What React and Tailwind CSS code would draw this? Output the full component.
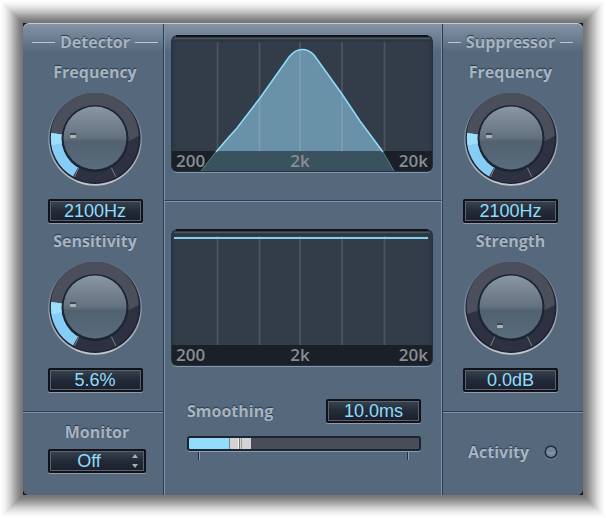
import React from "react";

const SHADE = [118, 122, 127, 133, 140, 147, 155, 163, 171, 180, 189, 197, 205, 213, 220, 227, 233, 238, 243, 247, 250, 253];
const halo = SHADE.map((v, i) => `0 0 0 ${i + 1}px rgb(${v},${v},${v})`).join(", ");

const LABEL =
  "font-['Open_Sans','Noto_Sans',sans-serif] text-[16px] leading-6 font-bold text-[#a9b4c1] [text-shadow:0_-1px_1px_#26384d]";
const VALUE =
  "block h-6 w-full rounded-[2px] border-2 border-[#10131a] bg-linear-to-b from-[#39444f] via-[#222b39] to-[#1d1e2d] p-0 text-center font-['Liberation_Sans',Arial,sans-serif] text-[18px] leading-5 text-[#8fdcfb] outline-none shadow-[0_1px_0_#8f9bab,inset_0_0_0_1px_#59626d]";

function Title({ children }) {
  return (
    <h2 className={`flex items-center gap-[5px] ${LABEL}`}>
      <span className="h-px flex-1 bg-[#bcc7d2]" />
      {children}
      <span className="h-px flex-1 bg-[#bcc7d2]" />
    </h2>
  );
}

function Knob({ id, off }) {
  return (
    <svg viewBox="0 0 94 94" className="block h-[94px] w-[94px]" aria-hidden="true">
      <defs>
        <linearGradient id={`${id}-cap`} x1="0" y1="0" x2="0" y2="1">
          <stop offset="0" stopColor="#8a98a6" />
          <stop offset="0.5" stopColor="#63707d" />
          <stop offset="0.56" stopColor="#51616f" />
          <stop offset="1" stopColor="#596d7e" />
        </linearGradient>
        <linearGradient id={`${id}-rim`} x1="0" y1="0" x2="0" y2="1">
          <stop offset="0" stopColor="#5d6e82" />
          <stop offset="0.5" stopColor="#8994a3" />
          <stop offset="1" stopColor="#c2c7cf" />
        </linearGradient>
      </defs>
      <circle cx="47" cy="47" r="46.8" fill={`url(#${id}-rim)`} />
      <circle cx="47" cy="46.5" r="45.5" fill="#1f2433" />
      <circle cx="47" cy="46.5" r="44" fill="#2d3141" />
      <path d="M3.5 53 L16 49 L16 47 L78 47 L79 50 L90.7 44 A44 44 0 1 0 3.5 53 Z" fill="#4b4f5c" />
      {!off && (
        <>
          <path d="M3.2 41 L14 42.5 A34 34 0 0 0 30 75.5 L25 84.500 A43.8 43.8 0 0 1 3.2 41 Z" fill="#86cdf6" />
          <path d="M3.2 41 L14 42.5 A34 34 0 0 0 14.5 51 L4 53.5 A43.8 43.8 0 0 1 3.2 41 Z" fill="#9bdffa" />
        </>
      )}
      <path d="M31 75 L26.500 85 M63 75 L68 85" stroke="#7a7f89" strokeWidth="1" />
      <circle cx="47" cy="46.5" r="33.5" fill="#1d2433" />
      <circle cx="47" cy="46" r="31.5" fill={`url(#${id}-cap)`} />
      {off ? (
        <>
          <rect x="33" y="62" width="6" height="2" fill="#3d4650" />
          <rect x="33" y="64" width="6" height="3" rx="1" fill="#adb0b4" />
        </>
      ) : (
        <>
          <rect x="22" y="41" width="6" height="2" fill="#3d4650" />
          <rect x="22" y="43" width="6" height="3" rx="1" fill="#adb0b4" />
        </>
      )}
    </svg>
  );
}

function Dial({ id, label, value, off }) {
  return (
    <div className="flex flex-col items-center">
      <label htmlFor={id} className={LABEL}>{label}</label>
      <div className="mt-2 mb-[13px]">
        <Knob id={`${id}-knob`} off={off} />
      </div>
      <div className="w-[95px]">
        <input id={id} readOnly value={value} className={VALUE} />
      </div>
    </div>
  );
}

const SLOPES =
  "L57 103 L66 93 L89 63 L118 22 Q124 14.500 131 14.500 Q138 14.500 143 20 L171 59 L189 86 L212 117";

function Graph({ id, curve }) {
  return (
    <div className="rounded-md shadow-[0_2px_0_-1px_#8796a8]">
      <svg viewBox="0 0 262 137" className="block w-full rounded-md" role="img" aria-label={id}>
        <rect width="262" height="137" rx="6" fill="#1e3346" />
        <rect x="1.5" y="1" width="259" height="134.5" rx="5" fill="#333d49" />
        <path d="M5 1 H257" stroke="#10151d" strokeWidth="2" />
        <path d="M3 3.5 H259" stroke="#4d565f" strokeWidth="1" />
        <path d="M2 6 H260" stroke="#29323d" strokeWidth="1" />
        <path d="M3.5 5 V132 M258.5 5 V132" stroke="#2a3540" strokeWidth="1" />
        {curve && <path d={`M30 136 L45 117 ${SLOPES} L223 136 Z`} fill="#6992a8" />}
        <path d="M46.500 7 V117 M88.500 7 V117 M129 7 V117 M171 7 V117 M213.500 7 V117" stroke="#fff" strokeOpacity="0.13" strokeWidth="1.6" />
        <path d="M1 116 H261 V131 Q261 136 256 136 H6 Q1 136 1 131 Z" fill="#1a1f28" />
        {curve && <path d="M45 116 H211 L223 136 H30 Z" fill="#3a525e" />}
        {curve && (
          <>
            <path d={`M45 117 ${SLOPES}`} fill="none" stroke="#8fdcfb" strokeWidth="1.5" />
            <path d="M45 117 L30 136 M212 117 L223 136" stroke="#55808f" />
          </>
        )}
        {!curve && <path d="M3 9 H257" stroke="#84cfec" strokeWidth="2" />}
        <g fill="#888d93" fontFamily="'Open Sans', 'Noto Sans', sans-serif" fontSize="17" fontWeight="600">
          <text x="5" y="132">200</text>
          <text x="129" y="132" textAnchor="middle">2k</text>
          <text x="257" y="132" textAnchor="end">20k</text>
        </g>
      </svg>
    </div>
  );
}

function Side({ title, inset, children, footer }) {
  return (
    <section className="flex flex-col">
      <div className={`flex flex-1 flex-col border-b border-[#2a3d55] pt-[6px] pb-[19px] ${inset}`}>
        <Title>{title}</Title>
        <div className="mt-[6px] flex flex-col items-center gap-[6px]">{children}</div>
      </div>
      <div className="h-[83px] border-t border-[#8292a7]">{footer}</div>
    </section>
  );
}

export default function App() {
  return (
    <main className="bg-white p-[23px]">
      <div className="bg-[#15191f]" style={{ boxShadow: halo }}>
        <div className="grid grid-cols-[140px_1fr_140px] overflow-hidden rounded-md border-t border-[#c3cdd8] bg-[#55687c] bg-[linear-gradient(to_bottom,#8494a5_0px,#55687c_28px)]">
          <Side
            title="Detector"
            inset="pl-[9px] pr-[5px]"
            footer={
              <div className="ml-[25px] flex w-[98px] flex-col items-center pt-[7px]">
                <label htmlFor="monitor" className={LABEL}>Monitor</label>
                <div className="relative mt-[5px] w-full">
                  <select id="monitor" className={`${VALUE} appearance-none pr-4`}>
                    <option>Off</option>
                    <option>On</option>
                  </select>
                  <svg viewBox="0 0 6 14" className="pointer-events-none absolute top-[5px] right-2 h-[14px] w-[6px]" fill="#a9adb3" aria-hidden="true">
                    <path d="M3 0 L6 4 H0 Z M0 10 H6 L3 14 Z" />
                  </svg>
                </div>
              </div>
            }
          >
            <Dial id="det-freq" label="Frequency" value="2100Hz" />
            <Dial id="det-sens" label="Sensitivity" value="5.6%" />
          </Side>

          <section className="flex flex-col border-x border-[#2a3d55]">
            <div className="border-x border-b border-x-[#8292a7] border-b-[#2a3d55] pt-[11px] pr-2 pb-7 pl-[6px]">
              <Graph id="Detector spectrum" curve />
            </div>
            <div className="flex-1 border-x border-t border-[#8292a7] pt-[27px] pr-2 pl-[6px]">
              <Graph id="Suppression" />
              <div className="pt-[33px] pr-3 pl-4">
                <div className="flex items-center justify-between">
                  <label htmlFor="smoothing" className={LABEL}>Smoothing</label>
                  <div className="w-[95px]">
                    <input aria-label="Smoothing time" readOnly value="10.0ms" className={VALUE} />
                  </div>
                </div>
                <input
                  id="smoothing"
                  type="range"
                  min="0"
                  max="100"
                  defaultValue="19"
                  className="mt-[13px] block h-[15px] w-full appearance-none rounded-[3px] border-2 border-[#1b2432] bg-[linear-gradient(to_right,#93dcfa_44px,#484d59_44px)] shadow-[0_1px_0_#8f9bab] [&::-webkit-slider-thumb]:h-[11px] [&::-webkit-slider-thumb]:w-[22px] [&::-webkit-slider-thumb]:appearance-none [&::-webkit-slider-thumb]:bg-[linear-gradient(to_right,#708898_1px,#d3d3d3_1px,#d3d3d3_9px,#f2f2f2_9px,#f2f2f2_10px,#777_10px,#777_11px,#d3d3d3_11px,#d3d3d3_12px,#999_12px,#999_13px,#d3d3d3_13px)]"
                />
                <div className="flex justify-between pt-px pr-3 pl-[11px]">
                  <span className="h-2 w-[2px] border-r border-l border-r-[#8f9bab] border-l-[#1f3047]" />
                  <span className="h-2 w-[2px] border-r border-l border-r-[#8f9bab] border-l-[#1f3047]" />
                </div>
              </div>
            </div>
          </section>

          <Side
            title="Suppressor"
            inset="pl-[5px] pr-[10px]"
            footer={
              <div className="flex items-center justify-between pt-[27px] pr-6 pl-[25px]">
                <span className={LABEL}>Activity</span>
                <svg viewBox="0 0 16 16" className="h-4 w-4" role="img" aria-label="Activity light off">
                  <circle cx="8" cy="8.500" r="7.300" fill="#75859a" />
                  <circle cx="8" cy="8" r="6.800" fill="#1f2f44" />
                  <circle cx="8" cy="8" r="5" fill="#76869a" />
                  <path d="M5 8.500 Q8 10.500 11 8.500" fill="none" stroke="#95a2b2" />
                </svg>
              </div>
            }
          >
            <Dial id="sup-freq" label="Frequency" value="2100Hz" />
            <Dial id="sup-strength" label="Strength" value="0.0dB" off />
          </Side>
        </div>
      </div>
    </main>
  );
}
